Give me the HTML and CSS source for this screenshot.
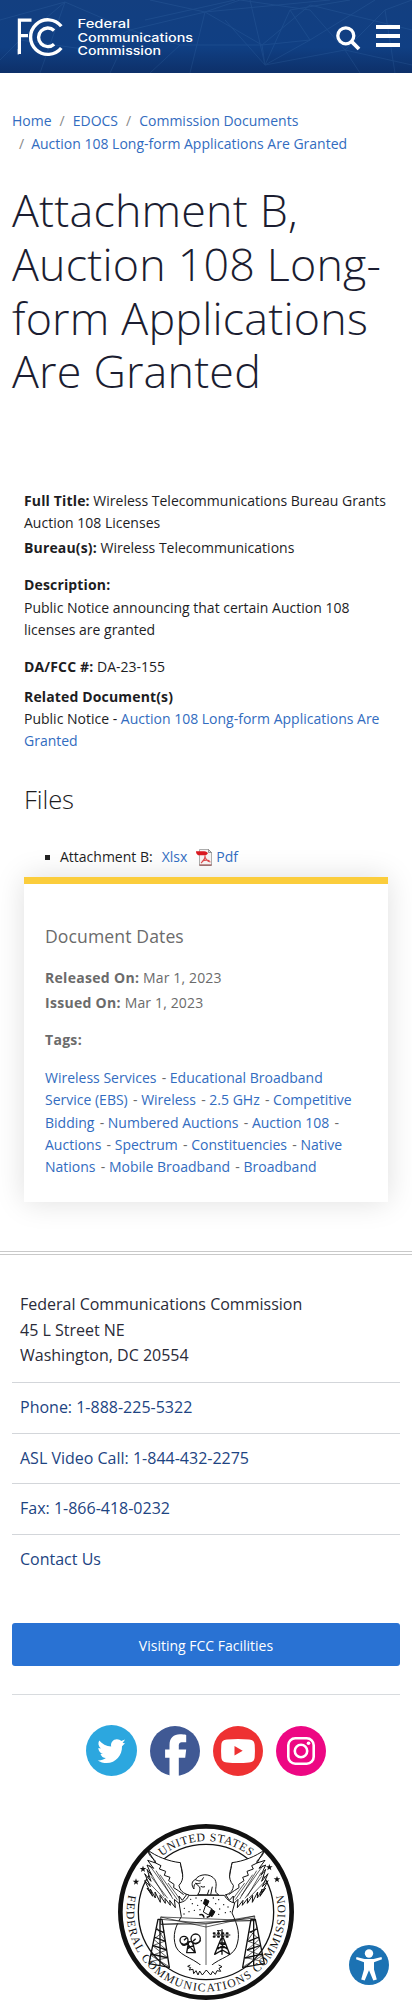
FILE: index.html
```html
<!DOCTYPE html>
<html lang="en">
<head>
<meta charset="utf-8">
<meta name="viewport" content="width=device-width, initial-scale=1">
<title>Attachment B, Auction 108 Long-form Applications Are Granted</title>
<link rel="stylesheet" href="styles.css">
</head>
<body>
<header class="site-header">
  <svg class="header-pattern" viewBox="0 0 412 73" preserveAspectRatio="none" aria-hidden="true">
    <path d="M0 20L65 2L130 30L205 12L262 45L310 5L412 30M40 73L65 2L20 40L0 60M130 30L110 73M205 12L150 0M205 12L190 73M205 12L240 0M205 12L330 0M145 20L235 0M262 45L265 65L310 40L262 45M265 65L225 20M265 65L250 0M265 65L290 10L350 0M265 65L345 50L412 65M290 10L310 40L375 0M130 30L180 45L262 45M20 40L90 50L130 30M345 50L385 10L412 0M385 10L395 73M345 50L360 73M180 45L150 73M240 0L310 10L345 50"/>
  </svg>
  <a class="logo" href="#">
    <svg width="178" height="40" viewBox="0 0 178 40" role="img" aria-label="FCC">
      <g fill="none" stroke="#fff">
        <path stroke-width="3.2" d="M15.5 2.1H3.400V36M3 17.7h9"/>
        <path stroke-width="3.4" d="M45.300 8.2A17.3 17.3 0 1 0 45.300 30"/>
        <path stroke-width="3.4" d="M38.100 12.4A9.3 9.3 0 1 0 38.100 26.2"/>
      </g>
      <path fill="#fff" d="M1.800 37V31h3.2v3z"/>
      <g class="logo-name">
        <text x="61.500" y="10" textLength="52.500" lengthAdjust="spacingAndGlyphs">Federal</text>
        <text x="61.500" y="23.500" textLength="115.5" lengthAdjust="spacingAndGlyphs">Communications</text>
        <text x="61.500" y="37" textLength="83.500" lengthAdjust="spacingAndGlyphs">Commission</text>
      </g>
    </svg>
  </a>
  <div class="header-tools">
    <svg width="25" height="25" viewBox="0 0 25 25" aria-label="Search"><circle cx="9.8" cy="9.8" r="8" fill="none" stroke="#fff" stroke-width="3.3"/><path d="M15.4 15.4L23 23" stroke="#fff" stroke-width="3.8"/></svg>
    <svg width="24" height="22" viewBox="0 0 24 22" aria-label="Menu"><path fill="#fff" d="M0 0h24v4H0zM0 9h24v4H0zM0 18h24v4H0z"/></svg>
  </div>
</header>

<nav class="breadcrumb">
  <a href="#">Home</a><span class="sep">/</span><a href="#">EDOCS</a><span class="sep">/</span><a href="#">Commission Documents</a><br>
  <span class="sep sep-first">/</span><a href="#">Auction 108 Long-form Applications Are Granted</a>
</nav>
<h1>Attachment B, Auction 108 Long-form Applications Are Granted</h1>

<main class="document">
  <p class="full-title"><b>Full Title:</b> Wireless Telecommunications Bureau Grants Auction 108 Licenses</p>
  <p class="bureau"><b>Bureau(s):</b> Wireless Telecommunications</p>
  <p class="desc-label"><b>Description:</b></p>
  <p class="desc">Public Notice announcing that certain Auction 108 licenses are granted</p>
  <p class="number"><b>DA/FCC #:</b> DA-23-155</p>
  <p><b>Related Document(s)</b></p>
  <p class="related">Public Notice - <a href="#">Auction 108 Long-form Applications Are Granted</a></p>
  <h2>Files</h2>
  <ul class="files">
    <li>Attachment B:<a class="file xlsx" href="#">Xlsx</a><svg width="17" height="17" viewBox="0 0 17 17" aria-hidden="true"><path fill="#f5f3f2" stroke="#999" stroke-width=".8" d="M3.5.5h9l3 3v13h-12z"/><path fill="#ddd" stroke="#777" stroke-width=".7" d="M12.5.5v3h3z"/><path fill="#d91920" d="M0 2.2h8.3c2 0 3 1 3.6 2.2L10 6.3H2.2C.8 5.5 0 4 0 2.2z"/><path fill="none" stroke="#dc494c" stroke-width="1.2" d="M5 14c2-2 4.600-4 4-7.500C8.500 8.700 11 12.500 14.500 13M6 12.300c2.500-1.300 5-1.600 7.500-.6"/><path fill="#8d3031" d="M3.500 15.500h12v1h-12z"/></svg><a class="file" href="#">Pdf</a></li>
  </ul>
  <aside class="dates">
    <h3>Document Dates</h3>
    <p class="released"><b>Released On:</b> Mar 1, 2023</p>
    <p class="issued"><b>Issued On:</b> Mar 1, 2023</p>
    <p class="tags-label"><b>Tags:</b></p>
    <p class="tags"><a href="#">Wireless Services</a> <i>-</i> <a href="#">Educational Broadband Service (EBS)</a> <i>-</i> <a href="#">Wireless</a> <i>-</i> <a href="#">2.5 GHz</a> <i>-</i> <a href="#">Competitive Bidding</a> <i>-</i> <a href="#">Numbered Auctions</a> <i>-</i> <a href="#">Auction 108</a> <i>-</i> <a href="#">Auctions</a> <i>-</i> <a href="#">Spectrum</a> <i>-</i> <a href="#">Constituencies</a> <i>-</i> <a href="#">Native Nations</a> <i>-</i> <a href="#">Mobile Broadband</a> <i>-</i> <a href="#">Broadband</a></p>
  </aside>
</main>

<footer class="site-footer">
  <address>Federal Communications Commission<br>45 L Street NE<br>Washington, DC 20554</address>
  <ul class="contacts">
    <li><a href="#">Phone: 1-888-225-5322</a></li>
    <li><a href="#">ASL Video Call: 1-844-432-2275</a></li>
    <li><a href="#">Fax: 1-866-418-0232</a></li>
    <li><a href="#">Contact Us</a></li>
  </ul>
  <a class="button" href="#">Visiting FCC Facilities</a>
  <div class="social">
    <svg width="51" height="51" viewBox="0 0 51 51" aria-label="Twitter"><circle cx="25.500" cy="25.500" r="25.500" fill="#2ca7df"/><path fill="#fff" d="M39 18.200l-3 3c.3 9-6.300 16.800-15.300 16.800-3.400 0-6.400-1-9-2.600 3.100.2 6-.7 8.200-2.400-2.600-.1-4.700-1.800-5.400-4.100h2.500c-2.700-.8-4.600-3-4.700-6l2.600.7c-2.500-2-3.200-5.200-1.700-8 2.900 3.500 7 5.700 12 6-.9-4 2-7.300 5.700-7.300 1.900 0 3.300.7 4.300 1.800l3.900-1.500-2.500 3.400z"/></svg>
    <svg width="50" height="50" viewBox="0 0 50 50" aria-label="Facebook"><circle cx="25" cy="25" r="25" fill="#405994"/><path fill="#fff" d="M19.500 50V31.800h-4.400v-8.300h4.400v-4.200c0-7.600 4.200-11 10.400-11 2.500 0 4.700.2 6.300.6v7.300h-3.700c-3 0-3.700 1.500-3.700 3.900v3.400h7.400l-1 8.300h-6.400V50z"/></svg>
    <svg width="50" height="50" viewBox="0 0 50 50" aria-label="YouTube"><circle cx="25" cy="25" r="25" fill="#ee3132"/><path fill="#fff" d="M14 13.600q11-1 22 0c4 .4 5.400 2 5.700 5.400q.5 6 0 12c-.3 3.700-1.700 5.100-5.700 5.500q-11 1-22 0c-4-.4-5.400-1.800-5.700-5.500q-.5-6 0-12c.3-3.400 1.700-5 5.700-5.400z"/><path fill="#ee3132" d="M21.500 20v9.500l8.200-4.700z"/></svg>
    <svg width="50" height="50" viewBox="0 0 50 50" aria-label="Instagram"><circle cx="25" cy="25" r="25" fill="#ed0783"/><g fill="none" stroke="#fff" stroke-width="2.600"><rect x="12.300" y="12.300" width="25.400" height="25.400" rx="7"/><circle cx="25" cy="25" r="6.200"/></g><circle cx="32.500" cy="17.300" r="1.800" fill="#fff"/></svg>
  </div>
  <svg class="seal" viewBox="49 38 534 534" role="img" aria-label="Seal of the Federal Communications Commission">
    <defs>
      <path id="arc-top" d="M103 305A213 213 0 0 1 529 305"/>
      <path id="arc-bottom" d="M84.600 249.400A238 238 0 1 0 547.400 249.400"/>
      <path id="star" d="M0-10L2.500-3H10L4 1.500 6 9 0 4.500-6 9-4 1.500-10-3h7.500z"/>
    </defs>
    <circle cx="316" cy="305" r="257" fill="#fff" stroke="#111" stroke-width="14"/>
    <circle cx="316" cy="305" r="203" fill="none" stroke="#111" stroke-width="4"/>
    <g fill="#111">
      <use href="#star" x="127" y="176"/><use href="#star" x="106" y="214"/>
      <use href="#star" x="506" y="171"/><use href="#star" x="529" y="207"/>
    </g>
    <g fill="#fff" stroke="#111" stroke-width="3" stroke-linejoin="round">
      <path d="M141 119C166 138 203 153 239 157L257 254L245 270 235 257 237 281 221 267 224 292 207 270 209 285 193 264 194 279 178 255 179 276 163 245 164 263 149 236 156 258 139 233 151 249 132 211 149 229 132 190 151 213 139 177 153 195 139 164 159 174 141 150 165 158z"/>
      <path d="M491 119C466 138 428 153 394 157L376 254 386 270 398 257 398 281 412 267 410 292 427 270 425 285 441 264 440 279 456 255 455 276 471 245 470 263 485 236 478 258 495 233 483 249 502 211 485 229 502 190 483 213 495 177 481 195 495 164 475 174 493 150 469 158z"/>
      <path fill="none" d="M141 119C146 145 166 145 165 158L181 166 176 176 195 183 191 195 208 201 204 211 220 222 219 232 233 241 249 253M491 119C486 145 466 145 469 158L453 166 458 176 439 183 443 195 426 201 430 211 414 222 415 232 401 241 384 253"/>
      <path fill="none" stroke-width="2" d="M149 186l42 72M139 211l50 52M146 164l66 92M151 198l50 66M166 181l51 85M178 193l52 75M202 218l34 46M482 186l-42 72M495 211l-50 52M488 164l-66 92M483 198l-50 66M468 181l-51 85M456 193l-52 75M432 218l-34 46"/>
      <path d="M239 157C244 183 254 205 235 225C237 239 247 250 265 254L373 254C390 250 398 239 398 225C378 203 390 180 394 157" stroke="none"/>
      <path fill="none" d="M239 157C244 183 254 205 235 225C237 239 247 250 265 254M373 254C390 250 398 239 398 225C378 203 390 180 394 157"/>
      <path d="M291 253C296 246 300 238 297 230L285 219C280 223 279 230 280 236C271 225 273 211 284 208C295 189 330 188 343 208C351 224 342 235 346 246L354 254z"/>
      <path fill="none" d="M284 208c9 3 12 6 19 2l6-9M285 219c7 2 11 0 15-1M300 228q7 4 13 1M335 229l-5 24M325 238l-5 15"/>
      <path d="M235 277C252 275 261 265 264 255H371C378 267 387 275 402 278L394 308C411 345 421 374 406 412C391 444 344 443 317 482C288 443 240 441 226 410C213 375 226 345 242 319z"/>
      <path d="M180 320L316 350 462 317 462 331 316 335 180 342z" stroke-width="2"/>
      <path fill="none" stroke-width="2" d="M180 320L462 331M180 342L316 341 462 317M182 327l132 12 147-16M316 342V477"/>
      <g fill="none" stroke-width="4"><path d="M172 327L145 460 206 471 184 327zM165 356l24 10M160 380l34 13M156 405l42 14M151 431l52 12M178 327v139"/><path stroke-width="2" d="M167 350l27 42-38 14 45 36-53 12M191 362l-32 25 39 32-46 17 50 31"/></g>
      <g fill="none" stroke-width="4"><path d="M464 327L491 460 426 471 451 327zM469 356l-22 10M475 380l-32 13M480 405l-41 14M485 431l-52 12M459 327v139"/><path stroke-width="2" d="M469 350l-29 42 40 14-45 36 53 12M447 362l29 25-37 32 46 17-54 31"/></g>
      <circle cx="250" cy="390" r="12" stroke-width="4"/><circle cx="285" cy="385" r="14" stroke-width="4"/>
      <path fill="none" stroke-width="4" d="M243 401q9 10 23-6M273 395q13 13 27-5M264 394l-6 33h26l-9-33zM262 414l18-10M263 404l20 22M250 390l8-8M285 385l-8 8"/>
      <path fill="none" stroke-width="4" d="M364 357V433M361 385l-19 47 23-13 22 13-18-47zM356 398h18M350 412h29M357 398l22 18M374 398l-23 19"/>
      <path stroke-width="6" stroke-linecap="round" stroke-dasharray="3 10" d="M339 369h52M339 379h52"/>
      <path fill="none" stroke-width="3" d="M338 374h51M349 361h12M353 361v12"/>
      <path fill="#111" d="M313 266l12 6-6 14-11-6zM332 296l11 8-9 15-12-8z"/>
      <path d="M315 284l18 11-9 19-16-9z"/><path fill="none" stroke-width="5" d="M296 314q11-5 14 8M334 310q-8 10-16 11"/>
      <path fill="none" stroke-width="4" stroke-linecap="round" d="M270 267h.1M286 263h.1M302 271h.1M275 280h.1M291 285h.1M251 294h.1M265 304h.1M281 300h.1M298 298h.1M250 311h.1M338 263h.1M354 268h.1M345 280h.1M369 283h.1M382 290h.1M357 296h.1M374 307h.1M389 304h.1M354 312h.1"/>
      <path d="M269 464l-8 4 9 4-5 7 12-2 2 13 7-9 6 13 5-12 8 12 12-15 13 15 6-11 8 9 5-11 11 2-5-9 9-5-10-5"/>
    </g>
    <g class="seal-text">
      <text><textPath href="#arc-top" startOffset="50%" text-anchor="middle" textLength="286">UNITED STATES</textPath></text>
      <text><textPath href="#arc-bottom" startOffset="50%" text-anchor="middle" textLength="852">FEDERAL COMMUNICATIONS COMMISSION</textPath></text>
    </g>
  </svg>
</footer>
<button class="a11y" aria-label="Accessibility">
  <svg width="40" height="40" viewBox="0 0 40 40"><circle cx="20" cy="20" r="20" fill="#1c72b3"/><circle cx="20" cy="8.500" r="4.200" fill="#fff"/><path fill="#fff" d="M7.500 12l8 2h9l8-2 .5 2.200-8 3v7.200l2.800 10.200-3.500 1L20 25.200l-4.300 10.400-3.500-1L15 24.400v-7.200l-8-3z"/></svg>
</button>
</body>
</html>
```
FILE: styles.css
```css
* { box-sizing: border-box; }
body {
  position: relative;
  width: 412px;
  height: 2001px;
  margin: 0;
  overflow: hidden;
  background: #fff;
  color: #1d1d1f;
  font: 14px/22px "Open Sans", sans-serif;
}
a { color: #326cc0; text-decoration: none; }
b { letter-spacing: .15px; }
p, h1, h2, h3, ul { margin: 0; padding: 0; }
ul { list-style: none; }
svg { display: block; flex: none; }

.site-header {
  position: relative;
  display: flex;
  justify-content: space-between;
  height: 73px;
  padding: 18px 12px 0 16px;
  background: linear-gradient(#133f80, #103f83 65%, #0d3069);
}
.header-pattern { position: absolute; inset: 0; width: 412px; height: 73px; fill: none; stroke: #66a2dc; stroke-width: 1; opacity: .12; }
.logo, .header-tools { position: relative; }
.logo-name { fill: #fff; font: 500 11.5px Inter, sans-serif; }
.header-tools { display: flex; gap: 15px; padding-top: 7px; }
.header-tools svg:first-child { margin-top: 1px; }

.breadcrumb { padding: 36px 12px 0; line-height: 23px; }
.sep { margin: 0 8px; color: #888; }
.sep-first { margin: 0 7px; }
h1 {
  margin: 28px 12px 0;
  color: #1b1d31;
  font-size: 44.8px;
  font-weight: 300;
  line-height: 53.75px;
  letter-spacing: .2px;
}
.document { padding: 92px 24px 0; }
.full-title { margin-bottom: 3px; }
.bureau { margin-bottom: 15px; }
.desc-label { margin-bottom: 1px; }
.desc { margin-bottom: 15px; }
.number { margin-bottom: 8px; }
h2 { margin-top: 32px; font-size: 25.6px; font-weight: 300; line-height: 32px; letter-spacing: -.1px; }
.files { padding: 30px 0 9px 20px; }
.files li { display: flex; align-items: center; height: 22px; }
.files li::before { content: ""; width: 5px; height: 5px; margin: 0 10px 0 1px; background: #222; }
.xlsx { margin: 0 9px; }
.files svg + a { margin-left: 3px; }

.dates {
  height: 325px;
  padding: 40px 21px 0;
  border-top: 7px solid #fbcd3c;
  background: #fff;
  box-shadow: 0 0 28px rgba(0, 0, 0, .13);
  color: #6b6b6b;
}
h3 { margin-bottom: 19px; font-size: 17.6px; font-weight: 400; line-height: 24px; letter-spacing: .1px; }
.released, .issued { letter-spacing: .15px; }
.dates b { letter-spacing: .3px; }
.released { margin-bottom: 3px; }
.issued { margin-bottom: 15px; }
.tags-label { margin-bottom: 16px; }
.tags { line-height: 22.3px; }
.tags i { margin-left: 1.6px; font-style: normal; }

.site-footer { margin-top: 49px; padding: 37px 12px 0; border-top: 4px double #c9c9c9; font-size: 16px; }
address { height: 90px; padding: 0 8px; color: #2a2b38; font-style: normal; line-height: 25.5px; }
.contacts li { height: 50.6px; padding: 12px 8px 0; border-top: 1px solid #d3d6da; line-height: 25.5px; }
.contacts a { color: #1d4482; }
.button { display: block; height: 43px; margin-top: 39px; border-radius: 3px; background: #2972d3; color: #fff; font-size: 14px; line-height: 45px; text-align: center; }
.social { display: flex; align-items: flex-end; justify-content: center; gap: 13px; height: 82px; margin-top: 28px; border-top: 1px solid #d8dbde; }
.seal { width: 178px; height: 178px; margin: 47px 0 0 105px; }
.seal-text { fill: #111; font: 35px "Liberation Serif", serif; }
.a11y { position: absolute; left: 349px; top: 1945px; padding: 0; border: 0; background: none; }
```
